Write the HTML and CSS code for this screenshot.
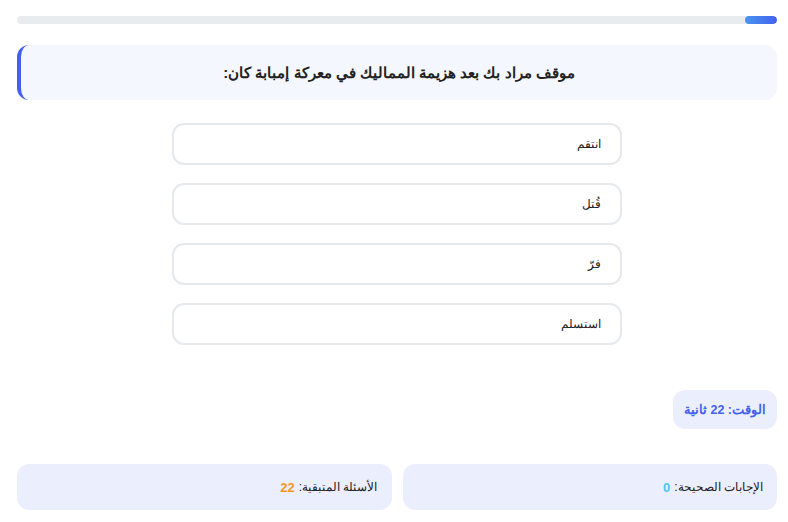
FILE: index.html
```html
<!DOCTYPE html>
<html lang="ar" dir="rtl">
<head>
<meta charset="utf-8">
<link rel="stylesheet" href="styles.css">
</head>
<body>
<div class="app">
  <div class="progress"><div class="progress-fill" style="width:32px"></div></div>
  <div class="question">موقف مراد بك بعد هزيمة المماليك في معركة إمبابة كان:</div>
  <div class="options">
    <button class="option">انتقم</button>
    <button class="option">قُتل</button>
    <button class="option">فرّ</button>
    <button class="option">استسلم</button>
  </div>
  <div class="timer-row"><div class="timer">الوقت: 22 ثانية</div></div>
  <div class="stats">
    <div class="stat">الإجابات الصحيحة: <b class="correct">0</b></div>
    <div class="stat">الأسئلة المتبقية: <b class="remaining">22</b></div>
  </div>
</div>
</body>
</html>
```
FILE: styles.css
```css
* { box-sizing: border-box; }
html, body { margin: 0; padding: 0; background: #fff; }
body { font-family: "Liberation Sans", sans-serif; color: #222; padding: 0 11px 0 17px; }
.app { padding-top: 16px; }
.progress { height: 8px; background: #e9ecef; border-radius: 4px; overflow: hidden; }
.progress-fill { height: 100%; background: linear-gradient(90deg, #4895ef, #4361ee); border-radius: 4px; }
.question {
  margin-top: 21px; height: 55px; background: #f4f7fe; border-radius: 12px;
  border-left: 4px solid #4361ee;
  display: flex; align-items: center; justify-content: center;
  font-size: 15px; font-weight: bold; color: #222;
}
.options { width: 450px; margin: 23px auto 0; display: flex; flex-direction: column; gap: 18px; }
.option {
  height: 42px; background: #fff; border: 2px solid #e5e8ec; border-radius: 12px;
  font-family: inherit; font-size: 11.5px; color: #222; text-align: right; padding: 0 19px;
}
.timer-row { display: flex; justify-content: flex-start; margin-top: 45px; }
.timer {
  height: 39px; padding: 0 11px; background: #ebeffd; border-radius: 12px;
  display: flex; align-items: center; color: #4361ee; font-weight: bold; font-size: 12.5px;
}
.stats { display: flex; gap: 11px; margin-top: 35px; }
.stat {
  flex: 1; height: 46px; background: #ebeefc; border-radius: 12px;
  display: flex; align-items: center; padding: 0 14px; font-size: 12px; color: #222;
}
.stat b { margin-right: 4px; font-size: 13px; }
.correct { color: #4cc9f0; }
.remaining { color: #f8961e; }
```
